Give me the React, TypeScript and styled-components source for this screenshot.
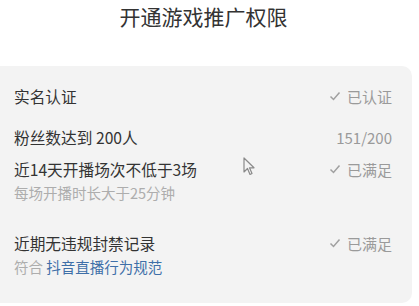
import React from 'react';
import styled, {createGlobalStyle} from "styled-components";

const GlobalStyle = createGlobalStyle`
  html, body {
    margin: 0;
    padding: 0;
    background: #FFFFFF;
  }
  body {
    font-family: "Noto Sans CJK SC", "Noto Sans", sans-serif;
  }
`;

const Page = styled.div`
  position: relative;
  width: 419px;
  height: 306px;
  overflow: hidden;
`;

const Title = styled.div`
  padding: 3px 12px 0 0;
  height: 66px;
  box-sizing: border-box;
  text-align: center;
  font-size: 21px;
  line-height: 26px;
  color: #333333;
`;

const Panel = styled.div`
  width: 412px;
  height: 237px;
  box-sizing: border-box;
  padding: 20px 20px 0 14px;
  background: #F3F3F3;
  border-radius: 0 10px 10px 0;
`;

const Item = styled.div<{$gap: number}>`
  margin-top: ${p => p.$gap}px;
`;

const Row = styled.div`
  display: flex;
  justify-content: space-between;
  align-items: center;
  height: 20px;
`;

const Label = styled.span`
  font-size: 15.7px;
  color: #333333;
`;

const Status = styled.span`
  display: flex;
  align-items: center;
  gap: 6px;
  font-size: 15px;
  color: #9A9A9A;
`;

const Sub = styled.div`
  margin-top: 4px;
  font-size: 14.5px;
  line-height: 20px;
  color: #ADADAD;
`;

const Link = styled.span`
  color: #3E6FA8;
`;

const Cursor = styled.svg`
  position: absolute;
  left: 243px;
  top: 157px;
`;

const Check = () => (
    <svg width="12" height="10" viewBox="0 0 12 10">
        <polyline points="1.5,5.5 4.5,8.5 10.5,1.5" fill="none" stroke="#A0A0A0" strokeWidth="1.5"/>
    </svg>
);

const Done: React.FC<{text: string}> = ({text}) => (
    <Status><Check/>{text}</Status>
);

const App = () => {
    return (
        <Page>
            <GlobalStyle/>
            <Title>开通游戏推广权限</Title>
            <Panel>
                <Item $gap={0}>
                    <Row><Label>实名认证</Label><Done text="已认证"/></Row>
                </Item>
                <Item $gap={21}>
                    <Row><Label>粉丝数达到 200人</Label><Status>151/200</Status></Row>
                </Item>
                <Item $gap={12}>
                    <Row><Label>近14天开播场次不低于3场</Label><Done text="已满足"/></Row>
                    <Sub>每场开播时长大于25分钟</Sub>
                </Item>
                <Item $gap={30}>
                    <Row><Label>近期无违规封禁记录</Label><Done text="已满足"/></Row>
                    <Sub>符合 <Link>抖音直播行为规范</Link></Sub>
                </Item>
            </Panel>
            <Cursor width="12" height="19" viewBox="0 0 12 19">
                <path d="M1 1 L1 15 L4.5 11.5 L7 17.5 L9 16.5 L6.5 10.8 L11 10.8 Z" fill="#F3F3F3" stroke="#8A8A8A" strokeWidth="1.2" strokeLinejoin="round"/>
            </Cursor>
        </Page>
    );
};

export default App;
